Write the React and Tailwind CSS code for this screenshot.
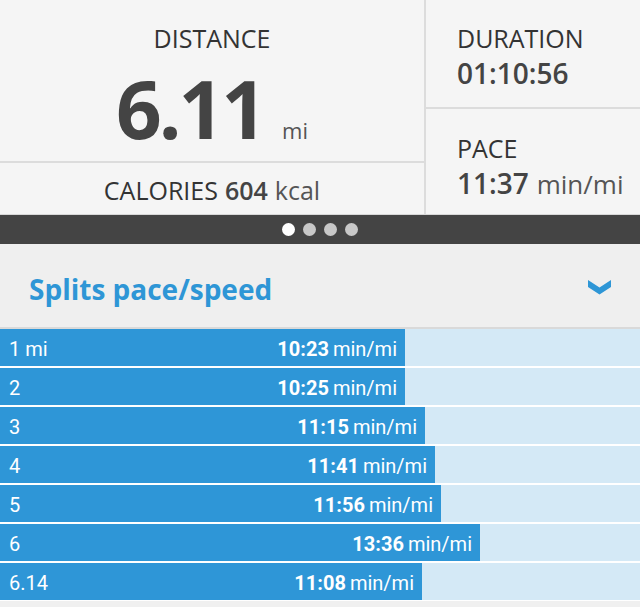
import React from "react";

const rows = [
  { label: "1 mi", time: "10:23", w: 405 },
  { label: "2", time: "10:25", w: 405 },
  { label: "3", time: "11:15", w: 425 },
  { label: "4", time: "11:41", w: 435 },
  { label: "5", time: "11:56", w: 441 },
  { label: "6", time: "13:36", w: 480 },
  { label: "6.14", time: "11:08", w: 422 },
];

export default function App() {
  const os = { fontFamily: '"Open Sans", "Noto Sans", sans-serif' };
  return (
    <div className="w-[640px] h-[607px] bg-[#f0f0f0] overflow-hidden" style={os}>
      <div className="flex h-[215px] bg-[#f5f5f5] border-b border-[#d8d8d8]">
        <div className="w-[426px] flex flex-col border-r-2 border-[#dcdcdc]">
          <div className="h-[161px] flex flex-col items-center pt-[22px]">
            <div className="text-[25px] leading-[32px] text-[#333]">DISTANCE</div>
            <div className="flex items-baseline mt-[14px] h-[80px]">
              <span className="text-[80px] leading-[80px] font-bold text-[#444] tracking-[-3px]">6.11</span>
              <span className="text-[22px] leading-[24px] text-[#555] ml-[18px]">mi</span>
            </div>
          </div>
          <div className="h-[2px] bg-[#dcdcdc]" />
          <div className="flex-1 flex items-center justify-center pt-[4px] text-[25px] text-[#333]">
            <span>CALORIES</span>
            <span className="font-semibold text-[#444] ml-[7px]">604</span>
            <span className="text-[#555] ml-[7px]">kcal</span>
          </div>
        </div>
        <div className="flex-1 flex flex-col">
          <div className="h-[107px] pl-[31px] pt-[22px]">
            <div className="text-[25px] leading-[32px] text-[#333]">DURATION</div>
            <div className="text-[28px] leading-[34px] font-semibold text-[#444] mt-[2px]">01:10:56</div>
          </div>
          <div className="h-[2px] bg-[#dcdcdc]" />
          <div className="flex-1 pl-[31px] pt-[23px]">
            <div className="text-[25px] leading-[32px] text-[#333]">PACE</div>
            <div className="leading-[34px] mt-[2px] whitespace-nowrap">
              <span className="text-[28px] font-semibold text-[#444]">11:37</span>
              <span className="text-[26px] text-[#555] ml-[8px]">min/mi</span>
            </div>
          </div>
        </div>
      </div>

      <div className="h-[29px] bg-[#444444] flex items-center justify-center gap-[8px]">
        <div className="w-[13px] h-[13px] rounded-full bg-white" />
        <div className="w-[13px] h-[13px] rounded-full bg-[#c8c8c8]" />
        <div className="w-[13px] h-[13px] rounded-full bg-[#c8c8c8]" />
        <div className="w-[13px] h-[13px] rounded-full bg-[#c8c8c8]" />
      </div>

      <div className="h-[85px] bg-[#efefef] border-b-2 border-[#d9d9d9] flex items-center justify-between pl-[29px] pr-[29px] pt-[6px]">
        <span className="text-[28px] font-bold text-[#2e96d6]">Splits pace/speed</span>
        <svg width="23" height="16" viewBox="0 0 23 16" className="-mt-[4px]">
          <polygon points="0,1 11.5,8.5 23,1 23,8 11.5,15.5 0,8" fill="#2e96d6" />
        </svg>
      </div>

      <div className="flex flex-col gap-[2px] bg-white pb-[1px]" style={{ fontFamily: 'Roboto, "Open Sans", sans-serif' }}>
        {rows.map((r, i) => (
          <div key={i} className="h-[37px] bg-[#d4e9f6] flex">
            <div
              className="h-full bg-[#2e96d7] flex items-center justify-between pl-[9px] pr-[8px] pt-[2px] text-white text-[20px]"
              style={{ width: r.w }}
            >
              <span>{r.label}</span>
              <span className="whitespace-nowrap">
                <span className="font-bold">{r.time}</span>
                <span className="ml-[4px]">min/mi</span>
              </span>
            </div>
          </div>
        ))}
      </div>
    </div>
  );
}
